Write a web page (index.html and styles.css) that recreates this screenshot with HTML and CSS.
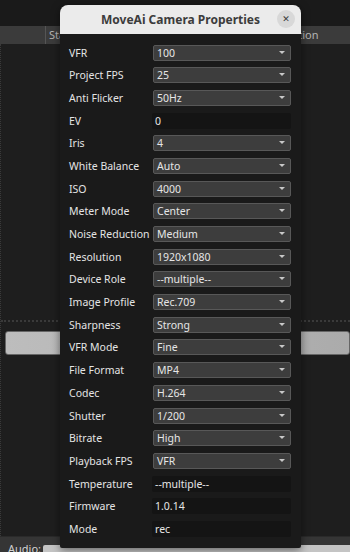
FILE: index.html
```html
<!DOCTYPE html>
<html lang="en">
<head>
  <meta charset="UTF-8">
  <meta name="viewport" content="width=device-width, initial-scale=1.0">
  <title>MoveAi Camera Properties</title>
  <link rel="stylesheet" href="styles.css">
</head>
<body>
  <div class="app">
    <div class="top-strip"></div>
    <div class="table-header">
      <div class="col col-first"></div>
      <div class="col col-status">Status</div>
      <div class="col col-action">Action</div>
    </div>
    <div class="table-body">
      <div class="dots-row"></div>
      <div class="button-bar"></div>
    </div>
    <div class="audio-bar">
      <span class="audio-label">Audio:</span>
      <div class="audio-field"></div>
    </div>
  </div>

  <!-- Properties dialog -->
  <div class="dialog">
    <div class="dialog-title">
      <span>MoveAi Camera Properties</span>
      <button class="close-btn">&#x2715;</button>
    </div>
    <div class="dialog-body">
      <div class="prop"><label>VFR</label><div class="select">100</div></div>
      <div class="prop"><label>Project FPS</label><div class="select">25</div></div>
      <div class="prop"><label>Anti Flicker</label><div class="select">50Hz</div></div>
      <div class="prop"><label>EV</label><div class="entry">0</div></div>
      <div class="prop"><label>Iris</label><div class="select">4</div></div>
      <div class="prop"><label>White Balance</label><div class="select">Auto</div></div>
      <div class="prop"><label>ISO</label><div class="select">4000</div></div>
      <div class="prop"><label>Meter Mode</label><div class="select">Center</div></div>
      <div class="prop"><label>Noise Reduction</label><div class="select">Medium</div></div>
      <div class="prop"><label>Resolution</label><div class="select">1920x1080</div></div>
      <div class="prop"><label>Device Role</label><div class="select">--multiple--</div></div>
      <div class="prop"><label>Image Profile</label><div class="select">Rec.709</div></div>
      <div class="prop"><label>Sharpness</label><div class="select">Strong</div></div>
      <div class="prop"><label>VFR Mode</label><div class="select">Fine</div></div>
      <div class="prop"><label>File Format</label><div class="select">MP4</div></div>
      <div class="prop"><label>Codec</label><div class="select">H.264</div></div>
      <div class="prop"><label>Shutter</label><div class="select">1/200</div></div>
      <div class="prop"><label>Bitrate</label><div class="select">High</div></div>
      <div class="prop"><label>Playback FPS</label><div class="select">VFR</div></div>
      <div class="prop"><label>Temperature</label><div class="entry">--multiple--</div></div>
      <div class="prop"><label>Firmware</label><div class="entry">1.0.14</div></div>
      <div class="prop"><label>Mode</label><div class="entry">rec</div></div>
    </div>
  </div>
</body>
</html>
```

FILE: styles.css
```css
body {
  margin: 0;
  width: 350px;
  height: 552px;
  overflow: hidden;
  background-color: #1e1e1e;
  font-family: "Noto Sans", "DejaVu Sans", sans-serif;
  font-size: 10.5px;
  color: #e6e6e6;
}

.app {
  display: flex;
  flex-direction: column;
  height: 552px;
}

.top-strip {
  height: 26px;
  background-color: #1a1a1a;
}

.table-header {
  display: flex;
  height: 18px;
  background-color: #3b3b3b;
  color: #b4b4b4;
  line-height: 18px;
  font-size: 11px;
}

.col {
  overflow: hidden;
  white-space: nowrap;
  padding-left: 3px;
}

.col-first {
  width: 42px;
  border-right: 1px solid #555;
}

.col-status {
  width: 234px;
}

.col-action {
  flex: 1;
}

.table-body {
  flex: 1;
  display: flex;
  flex-direction: column;
  background-color: #1e1e1e;
  border-left: 1px dotted #3a3a3a;
  padding-top: 276px;
}

.dots-row {
  height: 0;
  border-top: 2px dotted #3a3a3a;
  margin: 0 0 9px 0;
}

.button-bar {
  height: 22px;
  margin-left: 4px;
  border: 1px solid #666;
  border-radius: 3px;
  background: linear-gradient(to right, #bdbdbd, #ababab);
}

.audio-bar {
  display: flex;
  align-items: flex-end;
  height: 15px;
  background-color: #353535;
  border-top: 1px solid #2a2a2a;
}

.audio-label {
  color: #d0d0d0;
  padding-left: 8px;
  width: 35px;
  font-size: 11px;
  line-height: 10px;
  height: 8px;
  overflow: hidden;
}

.audio-field {
  flex: 1;
  height: 7px;
  background-color: #c4c4c4;
  border-radius: 2px 0 0 0;
}

/* dialog */
.dialog {
  position: absolute;
  left: 60px;
  top: 5px;
  width: 241px;
  height: 543px;
  background-color: #1a1a1a;
  border-radius: 8px 8px 2px 2px;
  box-shadow: 0 2px 8px rgba(0, 0, 0, 0.5);
  overflow: hidden;
}

.dialog-title {
  position: relative;
  height: 29px;
  background-color: #ebebeb;
  color: #3c3c3c;
  font-weight: bold;
  font-size: 12px;
  display: flex;
  align-items: center;
  justify-content: center;
}

.close-btn {
  position: absolute;
  right: 6px;
  top: 5px;
  width: 18px;
  height: 18px;
  border: none;
  border-radius: 50%;
  background-color: #d8d8d8;
  color: #3a3a3a;
  font-size: 9px;
  padding: 0;
  line-height: 18px;
  font-family: "DejaVu Sans", sans-serif;
}

.dialog-body {
  display: flex;
  flex-direction: column;
  gap: 6.7px;
  padding: 10.5px 10px 0 9px;
}

.prop {
  display: flex;
  align-items: center;
  height: 16px;
}

.prop label {
  width: 84px;
  white-space: nowrap;
  color: #e4e4e4;
}

.select,
.entry {
  flex: 1;
  height: 16px;
  line-height: 16px;
  box-sizing: border-box;
  padding-left: 3px;
  border-radius: 2px;
  white-space: nowrap;
}

.select {
  position: relative;
  background-color: #3d3d3d;
  border: 1px solid #585858;
  line-height: 14px;
}

.select::after {
  content: "";
  position: absolute;
  right: 5px;
  top: 5px;
  border-left: 3px solid transparent;
  border-right: 3px solid transparent;
  border-top: 3px solid #c8c8c8;
}

.entry {
  background-color: #141414;
  margin-left: -1px;
}
```
